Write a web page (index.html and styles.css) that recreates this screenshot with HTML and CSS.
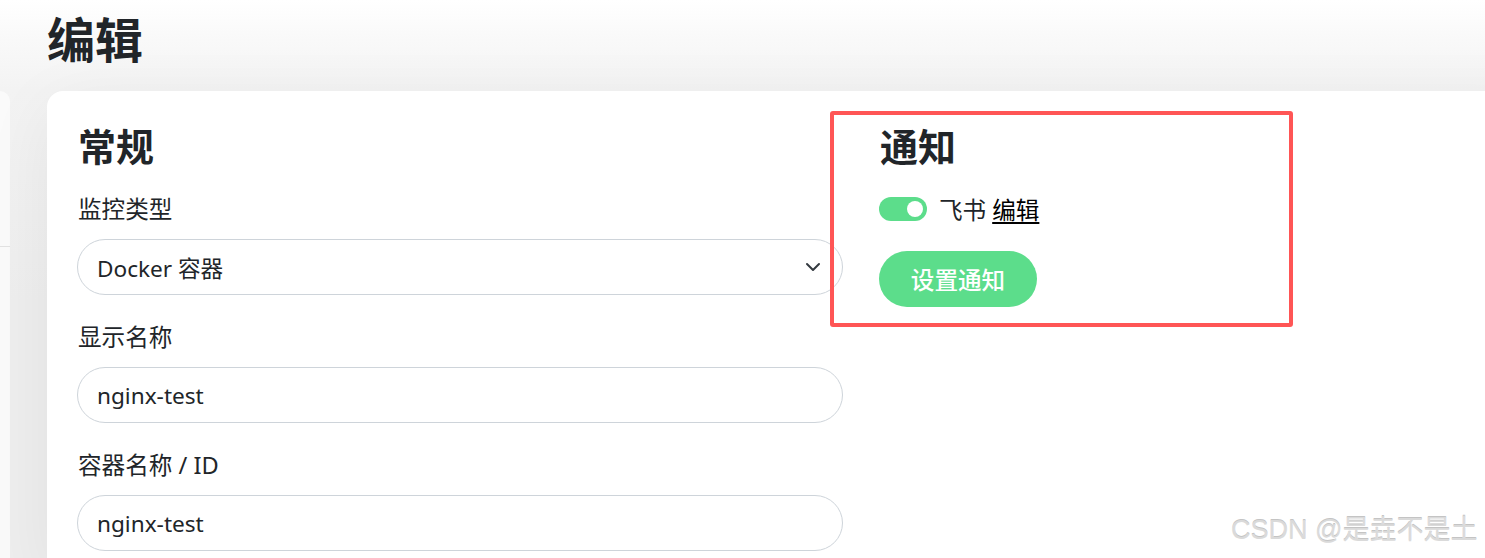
FILE: index.html
```html
<!DOCTYPE html>
<html lang="zh-CN">
<head>
<meta charset="utf-8">
<title>编辑</title>
<link rel="stylesheet" href="styles.css">
</head>
<body>
<div class="page">
  <h1 class="page-title">编辑</h1>
  <div class="layout">
    <aside class="sidebar"><div class="sidebar-head"></div></aside>
    <main class="card">
      <div class="cols">
        <section class="col">
          <h2 class="section-title">常规</h2>
          <div class="field">
            <label class="label">监控类型</label>
            <div class="control select">
              <span>Docker 容器</span>
              <svg class="chevron" viewBox="0 0 16 16" width="16" height="16"><path d="M2 5l6 6 6-6" fill="none" stroke="#343a40" stroke-width="2" stroke-linecap="round" stroke-linejoin="round"/></svg>
            </div>
          </div>
          <div class="field">
            <label class="label">显示名称</label>
            <div class="control">nginx-test</div>
          </div>
          <div class="field">
            <label class="label">容器名称 / ID</label>
            <div class="control">nginx-test</div>
          </div>
        </section>
        <section class="col">
          <h2 class="section-title">通知</h2>
          <div class="notify-row">
            <span class="switch"><span class="knob"></span></span>
            <span class="notify-name">飞书</span>
            <a class="notify-edit" href="#">编辑</a>
          </div>
          <button class="btn-primary" type="button">设置通知</button>
        </section>
      </div>
    </main>
  </div>
</div>
<div class="highlight"></div>
<div class="watermark">CSDN @是垚不是土</div>
</body>
</html>
```

FILE: styles.css
```css
* { box-sizing: border-box; }

html, body {
  margin: 0;
  padding: 0;
  height: 100%;
}

body {
  width: 1485px;
  height: 558px;
  overflow: hidden;
  position: relative;
  font-family: "Noto Sans", "Noto Sans CJK SC", sans-serif;
  color: #212529;
  background: linear-gradient(180deg, #ffffff 0px, #f9f9f9 40px, #f3f3f3 90px, #eeeeee 300px);
}

.page {
  display: flex;
  flex-direction: column;
}

.page-title {
  margin: 0;
  padding: 11px 0 0 47px;
  height: 91px;
  font-size: 48px;
  line-height: 58px;
  font-weight: 700;
  color: #212529;
}

.layout {
  display: flex;
  gap: 37px;
  align-items: flex-start;
}

.sidebar {
  width: 10px;
  height: 480px;
  background: #fafafa;
  border-radius: 0 12px 0 0;
  flex: none;
}

.sidebar-head {
  height: 156px;
  border-bottom: 1px solid #e2e2e2;
}

.card {
  flex: none;
  width: 1500px;
  height: 480px;
  background: #ffffff;
  border-radius: 16px 0 0 0;
  padding: 32px 30px 0 30px;
  box-shadow: 0 15px 70px rgba(0, 0, 0, 0.06);
}

.cols {
  display: grid;
  grid-template-columns: 766px 1fr;
  column-gap: 36px;
}

.section-title {
  margin: 0 0 22px 1px;
  font-size: 38px;
  line-height: 46px;
  font-weight: 700;
  color: #212529;
}

.field {
  margin-bottom: 24px;
}

.label {
  display: block;
  margin: 0 0 12px 1px;
  font-size: 23.6px;
  line-height: 36px;
}

.control {
  height: 56px;
  border: 1px solid #ced4da;
  border-radius: 28px;
  background: #fff;
  padding: 0 19px;
  display: flex;
  align-items: center;
  font-size: 22.6px;
  color: #212529;
}

.select {
  justify-content: space-between;
}

.chevron {
  margin-right: 2px;
}

.notify-row {
  display: flex;
  align-items: center;
  height: 36px;
  font-size: 23.6px;
  margin-bottom: 24px;
}

.switch {
  width: 48px;
  height: 24px;
  border-radius: 12px;
  background: #5cdd8b;
  position: relative;
  margin-right: 12px;
  flex: none;
}

.knob {
  position: absolute;
  top: 4px;
  right: 4px;
  width: 16px;
  height: 16px;
  border-radius: 50%;
  background: #fff;
}

.notify-name {
  margin-right: 6px;
}

.notify-edit {
  color: #000;
  text-decoration: underline;
  text-underline-offset: 3px;
}

.btn-primary {
  height: 56px;
  width: 158px;
  border: none;
  border-radius: 28px;
  background: #5cdd8b;
  color: #fff;
  font-family: inherit;
  font-size: 23.6px;
  font-weight: 500;
  padding: 0;
}

.highlight {
  position: absolute;
  left: 830px;
  top: 111px;
  width: 463px;
  height: 216px;
  border: 4px solid #ff5555;
  border-radius: 3px;
}

.watermark {
  position: absolute;
  left: 1231px;
  top: 511px;
  font-family: "Liberation Sans", "Noto Sans CJK SC", sans-serif;
  font-size: 27px;
  line-height: 38px;
  color: #dadada;
  text-shadow: 0 1px 0 #ffffff, 0 -1px 0 #c4c4c4;
  white-space: nowrap;
}
```
